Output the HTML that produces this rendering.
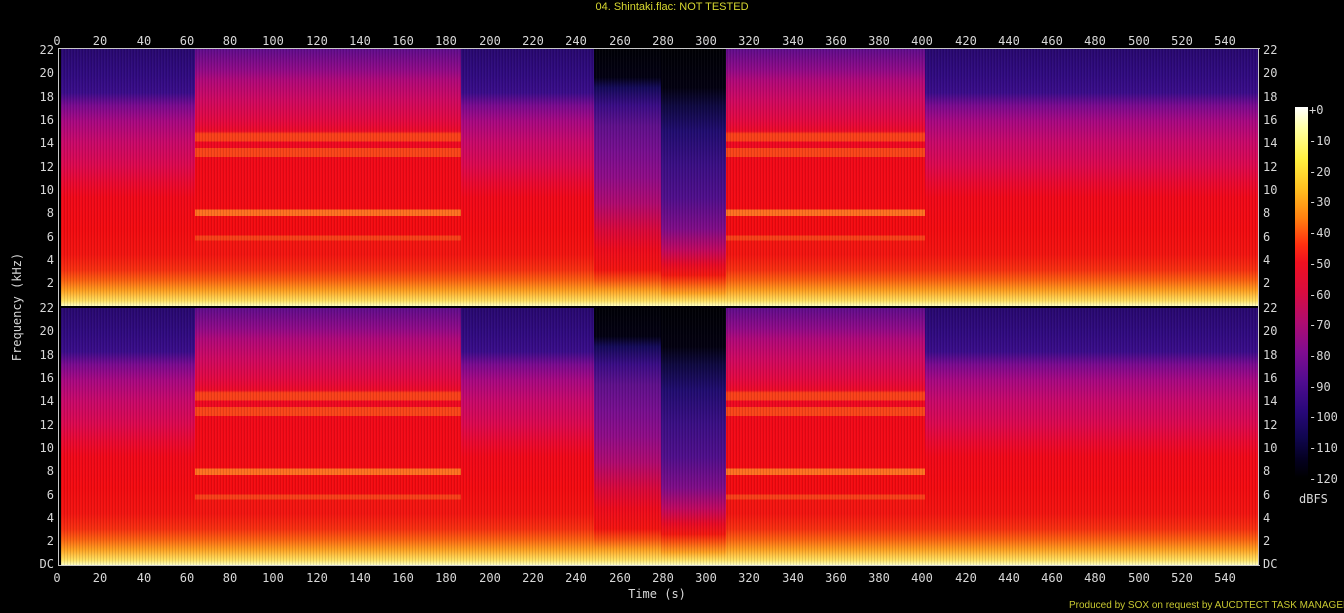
<!DOCTYPE html>
<html><head><meta charset="utf-8"><style>
html,body{margin:0;padding:0;background:#000;width:1344px;height:613px;overflow:hidden;position:relative;font-family:"DejaVu Sans Mono","Liberation Mono",monospace;}
.t{position:absolute;color:#d8d8d8;font-size:12px;line-height:12px;white-space:nowrap}
.xc{transform:translateX(-50%)}
.yl{transform:translate(-100%,-50%)}
.yr{transform:translateY(-50%)}
.ch{position:absolute;left:61px;width:1197px;height:257px;overflow:hidden;background:#e01020}
.s{position:absolute;top:0;height:100%}
.A{background:linear-gradient(to bottom,#280870 0%,#300a80 10%,#3a0c8a 17%,#7a0a90 22%,#a80882 28%,#c8086a 36%,#dc0850 45%,#ea0830 52%,#f20818 58%,#f40a10 70%,#f41410 80%,#f83010 86%,#fc6010 90%,#ffa020 94%,#ffe060 98%,#ffffc0 100%)}
.B{background:linear-gradient(to bottom,#600c8c 0%,#900a88 8%,#b0087a 12%,#d00860 20%,#e40840 28%,#ee0a28 32%,#fa4018 33%,#fa4018 36%,#f00820 36%,#f00820 38.5%,#fa4418 38.5%,#fa4418 42%,#f20818 42%,#f40a12 62.5%,#ff7020 62.5%,#ff7020 65%,#f40a10 65%,#f40a10 72.5%,#f84018 72.5%,#f84018 74.5%,#f41410 74.5%,#f41410 80%,#f83010 86%,#fc6010 90%,#ffa020 94%,#ffe060 98%,#ffffc0 100%)}
.C{background:linear-gradient(to bottom,#000006 0%,#020012 11%,#140a5a 15%,#3a0c86 22%,#60108c 30%,#780e90 40%,#900c88 50%,#b00a70 60%,#d8083c 70%,#ee0a1c 78%,#f41410 86%,#fa5010 90%,#ffa020 94%,#ffe060 98%,#ffffc0 100%)}
.C2{background:linear-gradient(to bottom,#000004 0%,#020010 15%,#0e0840 22%,#200c70 32%,#3a0e84 45%,#500e8c 58%,#800c88 70%,#c00860 78%,#e80a24 84%,#f41810 88%,#fa5010 91%,#ffa020 95%,#ffe060 98%,#ffffc0 100%)}
.tex{position:absolute;inset:0;background:repeating-linear-gradient(to right,rgba(0,0,0,0.1) 0 1px,rgba(255,255,255,0.03) 1px 2px,rgba(0,0,0,0) 2px 3px)}
.ax{position:absolute;background:#c8c8c8}
</style></head><body>
<div class="t xc" style="left:672px;top:1px;color:#d8d830;font-size:11px;font-family:'Liberation Sans',sans-serif">04. Shintaki.flac: NOT TESTED</div>

<div class="ch" style="top:49px">
<div class="s A" style="left:0;width:134px"></div>
<div class="s B" style="left:134px;width:266px"></div>
<div class="s A" style="left:400px;width:133px"></div>
<div class="s C" style="left:533px;width:67px"></div>
<div class="s C2" style="left:600px;width:65px"></div>
<div class="s B" style="left:665px;width:199px"></div>
<div class="s A" style="left:864px;width:333px"></div>
<div class="tex"></div>
</div>
<div class="ch" style="top:308px">
<div class="s A" style="left:0;width:134px"></div>
<div class="s B" style="left:134px;width:266px"></div>
<div class="s A" style="left:400px;width:133px"></div>
<div class="s C" style="left:533px;width:67px"></div>
<div class="s C2" style="left:600px;width:65px"></div>
<div class="s B" style="left:665px;width:199px"></div>
<div class="s A" style="left:864px;width:333px"></div>
<div class="tex"></div>
</div>
<div class="ax" style="left:58px;top:48px;width:1202px;height:1px"></div>
<div class="ax" style="left:58px;top:565px;width:1202px;height:1px"></div>
<div class="ax" style="left:58px;top:48px;width:1px;height:518px"></div>
<div class="ax" style="left:1258px;top:48px;width:1px;height:518px"></div>

<div class="t xc" style="left:57px;top:35px">0</div><div class="t xc" style="left:100px;top:35px">20</div><div class="t xc" style="left:144px;top:35px">40</div><div class="t xc" style="left:187px;top:35px">60</div><div class="t xc" style="left:230px;top:35px">80</div><div class="t xc" style="left:273px;top:35px">100</div><div class="t xc" style="left:317px;top:35px">120</div><div class="t xc" style="left:360px;top:35px">140</div><div class="t xc" style="left:403px;top:35px">160</div><div class="t xc" style="left:446px;top:35px">180</div><div class="t xc" style="left:490px;top:35px">200</div><div class="t xc" style="left:533px;top:35px">220</div><div class="t xc" style="left:576px;top:35px">240</div><div class="t xc" style="left:620px;top:35px">260</div><div class="t xc" style="left:663px;top:35px">280</div><div class="t xc" style="left:706px;top:35px">300</div><div class="t xc" style="left:749px;top:35px">320</div><div class="t xc" style="left:793px;top:35px">340</div><div class="t xc" style="left:836px;top:35px">360</div><div class="t xc" style="left:879px;top:35px">380</div><div class="t xc" style="left:922px;top:35px">400</div><div class="t xc" style="left:966px;top:35px">420</div><div class="t xc" style="left:1009px;top:35px">440</div><div class="t xc" style="left:1052px;top:35px">460</div><div class="t xc" style="left:1095px;top:35px">480</div><div class="t xc" style="left:1139px;top:35px">500</div><div class="t xc" style="left:1182px;top:35px">520</div><div class="t xc" style="left:1225px;top:35px">540</div>

<div class="t xc" style="left:57px;top:572px">0</div><div class="t xc" style="left:100px;top:572px">20</div><div class="t xc" style="left:144px;top:572px">40</div><div class="t xc" style="left:187px;top:572px">60</div><div class="t xc" style="left:230px;top:572px">80</div><div class="t xc" style="left:273px;top:572px">100</div><div class="t xc" style="left:317px;top:572px">120</div><div class="t xc" style="left:360px;top:572px">140</div><div class="t xc" style="left:403px;top:572px">160</div><div class="t xc" style="left:446px;top:572px">180</div><div class="t xc" style="left:490px;top:572px">200</div><div class="t xc" style="left:533px;top:572px">220</div><div class="t xc" style="left:576px;top:572px">240</div><div class="t xc" style="left:620px;top:572px">260</div><div class="t xc" style="left:663px;top:572px">280</div><div class="t xc" style="left:706px;top:572px">300</div><div class="t xc" style="left:749px;top:572px">320</div><div class="t xc" style="left:793px;top:572px">340</div><div class="t xc" style="left:836px;top:572px">360</div><div class="t xc" style="left:879px;top:572px">380</div><div class="t xc" style="left:922px;top:572px">400</div><div class="t xc" style="left:966px;top:572px">420</div><div class="t xc" style="left:1009px;top:572px">440</div><div class="t xc" style="left:1052px;top:572px">460</div><div class="t xc" style="left:1095px;top:572px">480</div><div class="t xc" style="left:1139px;top:572px">500</div><div class="t xc" style="left:1182px;top:572px">520</div><div class="t xc" style="left:1225px;top:572px">540</div>

<div class="t yl" style="left:54px;top:50px">22</div><div class="t yl" style="left:54px;top:73px">20</div><div class="t yl" style="left:54px;top:97px">18</div><div class="t yl" style="left:54px;top:120px">16</div><div class="t yl" style="left:54px;top:143px">14</div><div class="t yl" style="left:54px;top:167px">12</div><div class="t yl" style="left:54px;top:190px">10</div><div class="t yl" style="left:54px;top:213px">8</div><div class="t yl" style="left:54px;top:237px">6</div><div class="t yl" style="left:54px;top:260px">4</div><div class="t yl" style="left:54px;top:283px">2</div>
<div class="t yl" style="left:54px;top:308px">22</div><div class="t yl" style="left:54px;top:331px">20</div><div class="t yl" style="left:54px;top:355px">18</div><div class="t yl" style="left:54px;top:378px">16</div><div class="t yl" style="left:54px;top:401px">14</div><div class="t yl" style="left:54px;top:425px">12</div><div class="t yl" style="left:54px;top:448px">10</div><div class="t yl" style="left:54px;top:471px">8</div><div class="t yl" style="left:54px;top:495px">6</div><div class="t yl" style="left:54px;top:518px">4</div><div class="t yl" style="left:54px;top:541px">2</div><div class="t yl" style="left:54px;top:564px">DC</div>

<div class="t yr" style="left:1263px;top:50px">22</div><div class="t yr" style="left:1263px;top:73px">20</div><div class="t yr" style="left:1263px;top:97px">18</div><div class="t yr" style="left:1263px;top:120px">16</div><div class="t yr" style="left:1263px;top:143px">14</div><div class="t yr" style="left:1263px;top:167px">12</div><div class="t yr" style="left:1263px;top:190px">10</div><div class="t yr" style="left:1263px;top:213px">8</div><div class="t yr" style="left:1263px;top:237px">6</div><div class="t yr" style="left:1263px;top:260px">4</div><div class="t yr" style="left:1263px;top:283px">2</div>
<div class="t yr" style="left:1263px;top:308px">22</div><div class="t yr" style="left:1263px;top:331px">20</div><div class="t yr" style="left:1263px;top:355px">18</div><div class="t yr" style="left:1263px;top:378px">16</div><div class="t yr" style="left:1263px;top:401px">14</div><div class="t yr" style="left:1263px;top:425px">12</div><div class="t yr" style="left:1263px;top:448px">10</div><div class="t yr" style="left:1263px;top:471px">8</div><div class="t yr" style="left:1263px;top:495px">6</div><div class="t yr" style="left:1263px;top:518px">4</div><div class="t yr" style="left:1263px;top:541px">2</div><div class="t yr" style="left:1263px;top:564px">DC</div>

<div class="t" style="left:17px;top:307px;transform:translate(-50%,-50%) rotate(-90deg)">Frequency (kHz)</div>
<div class="t xc" style="left:657px;top:588px">Time (s)</div>

<div style="position:absolute;left:1295px;top:107px;width:13px;height:371px;background:linear-gradient(to bottom,#ffffff 0%,#ffffa0 6%,#fff040 14%,#ffc020 22%,#ff8010 30%,#ff3010 37%,#f01020 42%,#d80c40 50%,#b00c70 58%,#800c90 66%,#500c90 74%,#28087a 82%,#100650 89%,#040020 95%,#000000 100%)"></div>
<div class="t yr" style="left:1309px;top:110px">+0</div><div class="t yr" style="left:1309px;top:141px">-10</div><div class="t yr" style="left:1309px;top:172px">-20</div><div class="t yr" style="left:1309px;top:202px">-30</div><div class="t yr" style="left:1309px;top:233px">-40</div><div class="t yr" style="left:1309px;top:264px">-50</div><div class="t yr" style="left:1309px;top:295px">-60</div><div class="t yr" style="left:1309px;top:325px">-70</div><div class="t yr" style="left:1309px;top:356px">-80</div><div class="t yr" style="left:1309px;top:387px">-90</div><div class="t yr" style="left:1309px;top:417px">-100</div><div class="t yr" style="left:1309px;top:448px">-110</div><div class="t yr" style="left:1309px;top:479px">-120</div>
<div class="t" style="left:1299px;top:493px">dBFS</div>

<div class="t" style="left:1069px;top:601px;color:#c8c830;font-size:10px;line-height:10px;font-family:'Liberation Sans',sans-serif">Produced by SOX on request by AUCDTECT TASK MANAGER</div>
</body></html>
